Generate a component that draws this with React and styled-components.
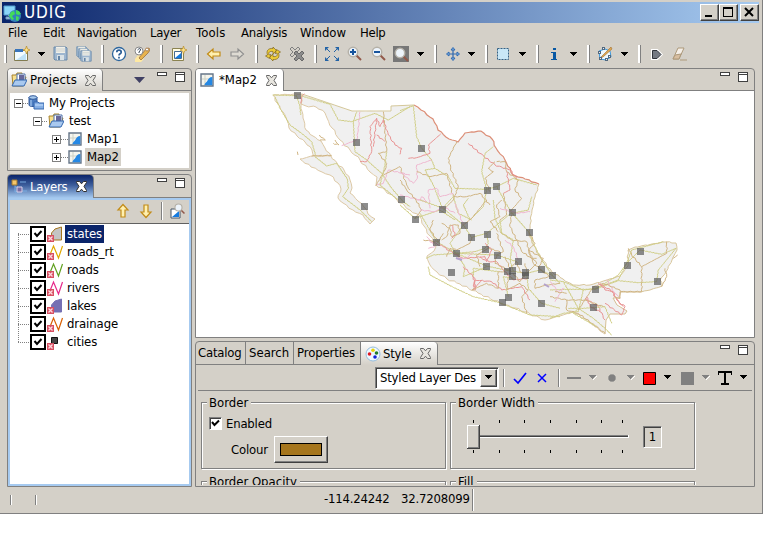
import React from "react";
import styled, { createGlobalStyle, css } from "styled-components";

const FACE = "#d4d0c8";
const SHADOW = "#808080";

const GlobalStyle = createGlobalStyle`
  * { box-sizing: border-box; }
  body { margin: 0; background: #fff; overflow: hidden; }
  svg { display: block; flex: none; }
`;

const Window = styled.div`
  width: 763px; height: 514px; display: flex; flex-direction: column;
  background: ${FACE}; border-right: 1px solid ${SHADOW}; border-bottom: 1px solid ${SHADOW};
  padding-top: 2px; color: #000;
  font: 13px/18px "DejaVu Sans Condensed", "DejaVu Sans", sans-serif;
  font-stretch: condensed;
`;
const Label = styled.span`
  flex: none; white-space: pre; width: ${p => (p.$w ? p.$w + "px" : "auto")};
  letter-spacing: ${p => p.$ls ?? -0.2}px; margin-left: ${p => p.$gap || 0}px;
`;
const TitleBar = styled.header`
  height: 21px; flex: none; margin: 0 3px 0 2px; display: flex; align-items: center;
  background: linear-gradient(90deg, #0a246a, #a6caf0); color: #fff; padding: 0 0 0 1px;
`;
const Title = styled.h1`
  margin: 0 auto 0 3px; font-size: 17px; font-weight: 400; line-height: 21px; letter-spacing: 0.9px;
`;
const CaptionButton = styled.button`
  width: 19px; height: 17px; padding: 0; margin-left: ${p => p.$gap || 0}px; background: ${FACE};
  border: 1px solid; border-color: #fff #404040 #404040 #fff; box-shadow: inset -1px -1px ${SHADOW};
`;
const MenuBar = styled.nav`height: 20px; flex: none; display: flex; align-items: center; padding-left: 8px;`;
const MenuItem = styled.span`width: ${p => p.$w}px; letter-spacing: ${p => p.$ls}px; white-space: nowrap; flex: none;`;
const ToolBar = styled.div`height: 25px; flex: none; display: flex; align-items: center; padding-bottom: 3px;`;
const Tool = styled.span`
  flex: none; display: flex; align-items: center; justify-content: center;
  width: ${p => p.$w || 16}px; height: 16px; margin-left: ${p => p.$gap}px;
`;
const Divider = styled.i`
  flex: none; width: 3px; height: ${p => p.$h || 18}px; margin-left: ${p => p.$gap}px;
  border-left: 2px solid #fff; border-right: 1px solid ${SHADOW};
`;
const Etch = styled.i`
  flex: none; width: 2px; height: ${p => p.$h}px; margin-left: ${p => p.$gap || 0}px;
  border-left: 1px solid ${SHADOW}; border-right: 1px solid #fff;
`;
const Workbench = styled.main`height: 419px; flex: none; display: flex; gap: 3px; padding-left: 7px;`;
const LeftColumn = styled.div`width: 185px; display: flex; flex-direction: column; gap: 3px;`;
const RightColumn = styled.div`width: 560px; display: flex; flex-direction: column; gap: 3px;`;
const Panel = styled.section`
  height: ${p => p.$h}px; flex: none; border: 1px solid ${SHADOW}; border-radius: 4px 4px 0 0;
  display: flex; flex-direction: column; overflow: hidden;
`;
const TabStrip = styled.div`height: ${p => p.$h || 22}px; flex: none; display: flex;`;
const Tab = styled.div`
  flex: none; width: ${p => p.$w}px; display: flex; align-items: center; padding-left: ${p => p.$pad ?? 3}px;
  border-right: 1px solid ${SHADOW};
  ${p => p.$kind === "plain" ? css`border-bottom: 1px solid ${SHADOW};`
    : p.$kind === "focus" ? css`background: linear-gradient(#0a246a, #3d5e9c 45%, #a6caf0); color: #fff; border-radius: 0 4px 0 0;`
    : p.$kind === "white" ? css`background: #fff; border-radius: 0 4px 0 0;`
    : css`background: linear-gradient(#fff, ${FACE}); border-radius: 0 4px 0 0;`}
`;
const StripRest = styled.div`
  flex: 1; display: flex; justify-content: flex-end; padding: 3px 6px 0 0; border-bottom: 1px solid ${SHADOW};
`;
const MinMark = styled.i`width: 10px; height: 4px; background: #fff; border: 1px solid #404040; margin-right: 8px;`;
const MaxMark = styled.i`width: 10px; height: 10px; background: #fff; border: 1px solid #404040; box-shadow: inset 0 1px #fff, inset 0 2px #404040;`;
const MenuMark = styled.svg`margin: 5px 12px 0 0;`;
const ProjectTree = styled.div`flex: 1; margin: 2px; background: #fff; display: flex; padding: 1px 0 0 4px;`;
const LayerBody = styled.div`
  flex: 1; border: 2px solid #a6caf0; background: #fff; display: flex; flex-direction: column;
`;
const LayerTools = styled.div`
  height: 24px; flex: none; background: ${FACE}; border-bottom: 1px solid #606060; display: flex; align-items: center; padding-left: 105px; padding-bottom:2px;
`;
const TreeRow = styled.div`height: 18px; display: flex; align-items: center; padding-left: ${p => p.$indent}px;`;
const TreeCol = styled.div`width: 100%; height: 72px;`;
const Expander = styled.i`
  flex: none; width: 9px; height: 9px; border: 1px solid ${SHADOW};
  background: linear-gradient(#000, #000) center/5px 1px no-repeat${p => p.$plus ? ", linear-gradient(#000, #000) center/1px 5px no-repeat" : ""};
`;
const Dots = styled.i`flex: none; width: ${p => p.$w}px; height: 1px; background: repeating-linear-gradient(90deg, ${SHADOW} 0 1px, transparent 1px 2px);`;
const NodeName = styled.span`
  line-height: 18px; height: 18px; padding: 0 2px; margin-left: ${p => p.$gap}px; letter-spacing: -0.1px; white-space: nowrap;
  ${p => p.$tone === "gray" && css`background: ${FACE};`}
  ${p => p.$tone === "navy" && css`background: #0a246a; color: #fff;`}
`;
const LayerList = styled.div`position: relative; padding: 1px 0 0 8px;`;
const LayerSpine = styled.i`
  position: absolute; left: 8px; top: 9px; height: 110px; width: 1px;
  background: repeating-linear-gradient(${SHADOW} 0 1px, transparent 1px 2px);
`;
const LayerCheck = styled.svg`margin: 0 1px 0 1px;`;
const Canvas = styled.div`flex: 1; background: #fff;`;
const StyleBar = styled.div`
  height: 26px; flex: none; margin: 0 2px; display: flex; align-items: center; padding: 0 0 0 177px;
  border-bottom: 1px solid ${SHADOW};
`;
const Combo = styled.div`
  flex: none; width: 124px; height: 22px; background: #fff; display: flex; align-items: center; justify-content: space-between;
  border: 1px solid; border-color: ${SHADOW} #fff #fff ${SHADOW}; box-shadow: inset 1px 1px #404040; padding: 1px 1px 1px 4px; overflow: hidden;
`;
const ComboButton = styled.span`
  flex: none; width: 17px; height: 18px; background: ${FACE}; display: flex; align-items: center; justify-content: center;
  border: 1px solid; border-color: #fff #404040 #404040 #fff; box-shadow: inset -1px -1px ${SHADOW};
`;
const StyleForm = styled.div`
  flex: 1; overflow: hidden; display: grid; grid-template-columns: 245px 245px; gap: 12px 4px; grid-template-rows: 67px 67px; padding: 11px 0 0 5px; margin-bottom: 1px;
`;
const Group = styled.div`
  border: 1px solid ${SHADOW}; box-shadow: 1px 1px #fff, inset 1px 1px #fff; display: flex; flex-direction: column; padding-left: 7px;
`;
const Legend = styled.span`
  align-self: flex-start; height: 16px; line-height: 16px; margin-top: -8px; margin-left: -2px; background: ${FACE};
  padding: 0 3px 0 2px; letter-spacing: 0; white-space: nowrap;
`;
const FormRow = styled.div`display: flex; align-items: center; height: ${p => p.$h}px; padding-left: ${p => p.$pad || 0}px;`;
const CheckBox = styled.span`
  width: 13px; height: 13px; background: #fff; border: 1px solid; border-color: ${SHADOW} #fff #fff ${SHADOW}; box-shadow: inset 1px 1px #404040;
`;
const ColourButton = styled.button`
  width: 54px; height: 27px; background: ${FACE}; padding: 6px 5px 5px 5px; margin-left: 6px; display: flex;
  border: 1px solid; border-color: #fff #404040 #404040 #fff; box-shadow: inset -1px -1px ${SHADOW};
`;
const Swatch = styled.i`width: 42px; height: 13px; border: 1px solid #000; background: #a6761d;`;
const ValueBox = styled.span`
  width: 19px; height: 22px; line-height: 20px; text-align: center; margin-left: 12px;
  border: 1px solid; border-color: ${SHADOW} #fff #fff ${SHADOW}; box-shadow: inset 1px 1px #404040;
`;
const StatusBar = styled.footer`flex: 1; display: flex; padding-left: 10px; align-items: center;`;
const Readout = styled.div`display: flex; align-items: center; margin-left: 287px; padding-bottom: 3px;`;

const Arrow = ({ c = "#000", hi }) => (
  <svg width="8" height="5" shapeRendering="crispEdges">
    {hi && <path d="M8 1L5 5H4L8 0z" fill="#fff" />}
    <path d="M0 0h7v1h-1v1h-1v1h-1v1h-1v-1h-1v-1h-1v-1h-1z" fill={c} />
  </svg>
);
const Close = ({ active }) => (
  <svg width="11" height="11" viewBox="0 0 11 11">
    <path d="M.5.5h3l2 2.3 2-2.3h3v1L8 5.4l2.5 4v1.1h-3l-2-2.3-2 2.3h-3v-1L3 5.4.5 1.5z" fill={active ? "#fff" : "#e8e6e0"} stroke={active ? "#303030" : "#666"} />
  </svg>
);
const I = ({ children, w = 16, h = 16 }) => <svg width={w} height={h} viewBox={`0 0 ${w} ${h}`}>{children}</svg>;

const FolderIcon = () => <I><path d="M1 3h4l1-2h5v4h4l-3 9H2z" fill="#f8e08c" stroke="#a88430" /><path d="M6 2h8v7H6z" fill="#fff" stroke="#4a6fa8" /><path d="M8 3h5v5H8z" fill="#68689a" /><path d="M4 8h12l-3 6H1z" fill="#a9c9ef" stroke="#3468b0" /></I>;
const ProjectsIcon = () => <I><path d="M1 2v8c0 2 8 2 8 0V2" fill="#4c7cc0" stroke="#31599a" /><ellipse cx="5" cy="2.5" rx="4" ry="1.8" fill="#a9cbee" stroke="#31599a" /><path d="M3 5v6" stroke="#b8d8f8" /><path d="M6 7h4l1 1h5v6H6z" fill="#86afe4" stroke="#3768b0" /><path d="M7 10h8" stroke="#c8e2ff" /></I>;
const MapIcon = () => <I w={14} h={14}><path d="M1 1h12v12H1z" fill="#f5f5ee" stroke="#657588" strokeWidth="1.4" /><path d="M5 2v10M2 6h10" stroke="#cbd0c5" /><path d="M12.300 4c-3 0-4 2-5 4s-2 1-3 4.300h8z" fill="#2588e4" /></I>;
const LayersIcon = () => <I w={17}><path d="M4 5v3h3M4 8v5h3M9 3h6M12 12h4" fill="none" stroke="#79abe0" /><path d="M1 1h5v5H1z" fill="#f5c66b" stroke="#a07830" /><path d="M6 8h5v5H6z" fill="#776ca4" stroke="#d8d0e8" /></I>;
const Magnify = ({ sign }) => <><path d="M9 9l5 5" stroke="#925849" strokeWidth="2" /><circle cx="6" cy="6" r="4.700" fill="#edf4fb" stroke="#b5b1a8" strokeWidth="1.500" />{sign && <path d={sign} stroke="#17549d" strokeWidth="2" />}</>;
const BlockArrow = ({ c = "#c28b17", f = "#fff0b0", r = 0 }) => <I><path transform={`rotate(${r} 8 8)`} d="M1.500 8l5.500-5v3h7v4H7v3z" fill={f} stroke={c} strokeWidth="1.200" /></I>;
const Disk = () => <><path d="M1 1h12l1 1v12H2l-1-1z" fill="#9eb6cf" stroke="#6889aa" /><path d="M3 1h9v6H3z" fill="#f1f0e8" /><path d="M3 3h9M3 5h9" stroke="#cdd2d2" /><path d="M4 9h7v5H4z" fill="#d9e1e5" /><path d="M5 10h2v4H5z" fill="#6585a7" /></>;

const icons = {
  new: <I><path d="M.5 4.500h13v10H.5z" fill="#f1fbff" stroke="#827c51" /><path d="M1 3h8v3H1z" fill="#3975bb" /><path d="M2 14L12 7v7z" fill="#bfe3f7" /><path d="M12.500 0l1 3 2.500 1-2.500 1-1 3-1-3-2.500-1 2.500-1z" fill="#ffe48b" stroke="#b98c27" strokeWidth=".7" /></I>,
  save: <I><Disk /></I>,
  saveall: <I><g transform="scale(.75)"><Disk /></g><g transform="translate(2 2) scale(.75)"><Disk /></g><g transform="translate(4 4) scale(.8)"><Disk /></g></I>,
  help: <I><circle cx="8" cy="8" r="6.500" fill="#fff" stroke="#2d669e" strokeWidth="1.300" /><path d="M5.800 6.200q0-2 2.200-2t2.200 2c0 1.800-2.200 1.300-2.200 3.300M8 10.700v1.800" fill="none" stroke="#2c5e96" strokeWidth="1.700" /></I>,
  key: <I><path d="M1 13l4-5 5 5-3 3H1z" fill="#ffe9a2" /><path d="M5 12l7-9 3-1 1 2-2 3-7 7z" fill="#e8b34d" stroke="#9d7040" strokeWidth=".8" /><circle cx="5" cy="5" r="4" fill="#fff" stroke="#888" /><path d="M3.500 4q3-3 3 0L5 6v1" fill="none" stroke="#345" /><circle cx="13" cy="3.500" r="1.500" fill="#fff" stroke="#ad8355" /></I>,
  addmap: <I><path d="M1.500 2.500h11v12h-11z" fill="#fffae0" stroke="#8b8351" /><path d="M3.500 5.500h7v7h-7z" fill="#fff" stroke="#456b92" /><path d="M10 7l-6 5h6z" fill="#147be0" /><path d="M12.500 0l1 3 2.500 1-2.500 1-1 3-1-3-2.500-1 2.500-1z" fill="#ffe48b" stroke="#b98c27" strokeWidth=".7" /></I>,
  back: <BlockArrow />,
  fwd: <BlockArrow c="#909090" f="#dedbd3" r={180} />,
  refresh: <I><path d="M8 2.500C3 2 1 5 2.500 9L.500 10l4 2.500L6 8.500l-2 .5C3 6 5 5 8 5.500V8l3.500-3.500L8 1zM8 13.500c5 .5 7-2.500 5.500-6.500l2-1-4-2.500L10 7.500l2-.5c1 3-1 4-4 3.500V8l-3.500 3.500L8 15z" fill="#eccb37" stroke="#806621" strokeWidth=".7" /></I>,
  stop: <I><path d="M1 3l2-2 3 3 3-3 2 2-3 3 3 3-2 2-3-3-3 3-2-2 3-3z" fill="#d4d0c8" stroke="#808080" /><path d="M5 7l2-2 3 3 3-3 2 2-3 3 3 3-2 2-3-3-3 3-2-2 3-3z" fill="#8c8c8c" stroke="#696969" /></I>,
  extent: <I><path d="M2 2l12 12M14 2L2 14" stroke="#9fb7d0" strokeDasharray="5 6" /><path d="M1 5V1h4zM11 1h4v4zM15 11v4h-4zM5 15H1v-4z" fill="#2363a6" /><path d="M2 2l4 4M14 2l-4 4M2 14l4-4M14 14l-4-4" stroke="#2363a6" /></I>,
  zoomin: <I><Magnify sign="M6 3v6M3 6h6" /></I>,
  zoomout: <I><Magnify sign="M3 6h6" /></I>,
  zoombox: <I><path d="M0 0h16v16H0z" fill="#777" /><g transform="translate(1 1)"><Magnify /></g></I>,
  pan: <I><path d="M8 3v10M3 8h10" stroke="#2e68b0" strokeWidth="1.200" /><path d="M8 1.500L6 4h4zM8 14.500L6 12h4zM1.500 8L4 6v4zM14.500 8L12 6v4z" fill="#8fc0ee" stroke="#2e68b0" /></I>,
  select: <I><path d="M2.500 2.500h11v11h-11z" fill="#c9e7f7" stroke="#346184" strokeDasharray="2 1" /></I>,
  info: <I><path d="M7 2h3v2H7zM5 6h5v7h1v1H5v-1h2V7H5z" fill="#0758a4" /></I>,
  edit: <I><path d="M2 5l6-2 5 2 1 6-5 3-6-1z" fill="#edf8ff" stroke="#3998df" /><path d="M5 10L14 1l1 2-9 8-3 1z" fill="#dda653" stroke="#a17130" strokeWidth=".6" />{[[1.5,5.5],[5.500,1.500],[11.500,9.500],[2.500,11.500],[8.500,12.500]].map(([x,y]) => <rect key={`${x}-${y}`} x={x} y={y} width="2" height="2" fill="#eee" stroke="#526980" />)}</I>,
  poly: <I><path d="M4.500 4.500H9l4 4-4 4H4.500z" fill="#747982" stroke="#fff" strokeWidth="3" /><path d="M4.500 4.500H9l4 4-4 4H4.500z" fill="#747982" stroke="#30343b" /></I>,
  eraser: <I><path d="M7 2h6L8 13H2z" fill="#f4eee7" stroke="#ad997b" /><path d="M2 13l2-4 6-1-2 5zM9 14h7" fill="#d8bea0" stroke="#ad997b" /></I>,
};
const toolbar = [
  ["|", 4], ["new", 7], ["v", 8], ["save", 7], ["saveall", 7], ["|", 9], ["help", 7], ["key", 7], ["|", 10], ["addmap", 8],
  ["|", 9], ["back", 7], ["fwd", 7], ["|", 10], ["refresh", 7], ["stop", 8], ["|", 9], ["extent", 7], ["zoomin", 7], ["zoomout", 8],
  ["zoombox", 6], ["v", 8], ["|", 9], ["pan", 8], ["v", 7], ["|", 9], ["select", 7], ["v", 8], ["|", 9], ["info", 7], ["v", 8],
  ["|", 9], ["edit", 7], ["v", 8], ["|", 9], ["poly", 7], ["eraser", 7],
];
const layers = [
  ["states", "area", "#a6761d", "#c4c4c4"], ["roads_rt", "line", "#e0a800"], ["roads", "line", "#60a020"], ["rivers", "line", "#e7298a"],
  ["lakes", "area", "#7570b3", "#7570b3"], ["drainage", "line", "#d95f02"], ["cities", "point", "#333"],
];
const LayerIcon = ({ kind, c, fill }) => (
  <I w={17} h={18}>
    {kind === "area" && <path d="M4.500 8L8 4l6.500-2v13H5z" fill={fill} stroke={c} />}
    {kind === "line" && <path d="M2.500 13l4-10 5 12 4-12" fill="none" stroke={c} strokeWidth="1.200" />}
    {kind === "point" && <path d="M4.500 4.500h6v6h-6z" fill="#444" stroke="#111" />}
    <path d="M0 10h7v7H0z" fill="#d75062" /><path d="M1.500 11.500l4 4m0-4l-4 4" stroke="#ffd8df" strokeWidth="1.300" />
  </I>
);

/* Subdivides each segment and nudges the new vertices, giving coastlines and rivers their ragged edge. */
function rough(points, amp = 1) {
  const n = points.trim().split(/\s+/).map(p => p.split(",").map(Number));
  const out = [n[0]];
  for (let i = 1; i < n.length; i++) {
    const [x0, y0] = n[i - 1], [x1, y1] = n[i];
    const steps = Math.max(1, Math.round(Math.hypot(x1 - x0, y1 - y0) / (3.5 * Math.max(1, amp))));
    for (let k = 1; k < steps; k++) {
      const t = k / steps, j = Math.sin((x0 + i * 7 + k * 3.7) * 12.98) * amp;
      out.push([x0 + (x1 - x0) * t + j, y0 + (y1 - y0) * t - j * 0.7]);
    }
    out.push([x1, y1]);
  }
  return out.map(p => p.map(v => v.toFixed(1)).join(",")).join(" ");
}
const bajaNorth = "273,95 302,94 301,105 303,118 306,130 313,136 321,141 325,148 331,156 314,157 312,150 305,142 297,136 289,128 287,120 283,112 277,103 273,95";
const bajaSouth = "300,159 313,156 331,156 337,163 344,170 350,180 352,188 350,193 358,201 364,207 368,214 375,219 370,224 363,215 353,210 343,203 338,198 341,189 338,183 330,175 322,172 311,167 300,159";
const coast = "605,334 590,322 573,312 560,316 545,320 530,314 515,308 500,303 478,293 460,284 447,279 437,272 430,265 427,256 434,251 436,245 430,236 424,226 420,216 410,210 397,200 385,190 376,185 377,177 370,172 360,160 350,150 340,140 332,128 327,118 325,113 316,107 306,106 301,104 302,94";
const gulf = "539,184 535,197 532,210 530,225 529,232 532,243 541,258 552,272 563,279 573,285 590,285 607,280 620,276 628,266 628,250 635,247 665,242 676,243 677,250 672,260 666,272 660,280 662,286 650,290 641,292";
const usBorder = "414,105 421,110 433,119 438,130 449,139 458,142 465,133 481,131 492,139 496,148 505,160 513,175 525,179 539,184";
const north = "302,94 352,111 391,111 391,106 414,105";
const south = "641,292 620,292 620,298 613,298 617,305 627,311 625,314 610,314 606,320 605,334";
const mainland = [north, usBorder, gulf, south, coast].join(" ");

/* Line work is kept per sheet at three units to the pixel. */
const sheets = [
  { at: [260, 85], lines: [
    ["y", "38,30 110,32 120,65 122,90"], ["y", "45,35 60,70 90,120 125,145 155,170 165,205 165,215 200,243 230,235 262,282 265,310 248,335 300,375 335,410"],
    ["b", "155,213 215,211"], ["r", "122,55 124,38 133,26"],
    ["y", "125,33 210,58 235,105 275,110 345,85 385,105 450,65"], ["y", "290,80 280,110 285,200 320,225 365,265 395,310 430,350 450,365"],
    ["b", "370,80 380,200 355,205 380,235 375,255 347,303"], ["p", "300,80 295,135 290,165 245,182"], ["r", "350,100 330,125 335,200 320,230 300,230"],
    ["r", "340,185 350,100 360,125 370,105 385,150 405,180 425,190 420,208"], ["r", "350,150 375,170"], ["p", "350,300 370,295 385,255 450,270"],
    ["b", "370,270 420,245 440,300 450,315"], ["y", "380,200 375,240 360,300 415,345"], ["b", "178,150 196,165 180,165"], ["b", "112,200 114,210"], ["b", "225,165 237,180 220,175"],
  ] },
  { at: [400, 90], lines: [
    ["y", "40,47 50,140 65,175 95,210 105,235 145,260 165,295 260,298 290,290"], ["y", "0,62 40,47"], ["b", "170,155 145,205 155,245 175,290 160,330 130,360"],
    ["r", "122,132 85,165 90,190 50,203 25,205"], ["p", "95,210 50,225 52,265 40,280 0,245"], ["r", "205,160 240,190 285,225 330,240 355,270"], ["y", "280,170 255,190 245,245 260,298 250,350 210,390"],
    ["b", "285,215 265,235 280,245 255,265 270,305"], ["b", "290,215 315,215 320,245 355,270 345,300 365,325 330,365"], ["y", "290,290 340,265 410,285"], ["y", "290,290 335,370"],
    ["b", "50,245 90,260 140,250 160,320 200,320 240,310 270,345"], ["r", "320,245 330,300 310,310"], ["y", "105,235 75,240 100,285 127,355 160,320 175,370 215,390"],
    ["p", "0,315 60,330 65,320 80,335 40,325"], ["p", "90,355 85,300 110,295 120,320 160,310"], ["b", "0,270 20,300 45,325 65,360 45,385"], ["y", "0,345 45,385 120,360 165,390"],
    ["b", "310,310 320,375 300,390"], ["y", "335,370 385,360 395,320"], ["p", "300,355 350,370 390,365"], ["y", "205,325 190,345 210,390"],
  ] },
  { at: [420, 200], lines: [
    ["y", "0,40 50,125 108,160 200,198 265,212 320,220 360,210 398,227"], ["y", "25,200 30,225 100,262 160,290 240,308 330,345 420,350"], ["y", "18,175 40,165 108,160 135,200 130,230 200,200"],
    ["y", "0,0 70,25 130,75 155,112 200,100 275,38 328,98"], ["y", "130,75 90,130 108,160 230,165 290,185"], ["y", "200,100 205,130 195,145 165,155 108,160"],
    ["b", "65,70 90,85 95,110 120,100 115,75 90,75 80,110 65,120"], ["r", "35,125 70,140 100,160 130,175 195,170 205,185 230,185 255,215 280,240 325,235"],
    ["b", "155,112 150,130 110,150 90,145 80,170"], ["b", "235,95 210,65 240,50 230,15 245,0"], ["b", "275,38 270,80 290,120 305,155 335,175 350,175"], ["b", "240,95 275,120 320,125 330,165 350,190 320,220"],
    ["b", "230,100 250,155 230,165 225,190 275,215"], ["y", "328,98 345,140 365,180 398,227 420,250"], ["b", "328,98 345,130 325,150 340,190 365,210"], ["y", "240,60 245,100 280,120 270,180 280,215"],
    ["r", "95,75 105,105 95,115"], ["r", "160,230 165,270 165,240 215,245 245,270 305,260 330,300"], ["r", "130,200 165,235 160,270 185,240"], ["r", "180,170 200,185 215,150 195,130"],
    ["b", "155,270 200,250 235,265 235,215 255,215"], ["b", "265,230 260,270 300,250 325,270 305,290 320,340"], ["y", "160,230 160,205 235,215"], ["b", "10,120 55,125 70,100"],
    ["p", "0,30 45,35 70,20 105,40"], ["p", "105,10 130,75"], ["p", "255,120 280,140 295,180"], ["p", "110,175 140,175 160,155"], ["p", "20,110 45,140 25,145"],
    ["b", "325,150 370,175 355,205 390,230 345,240 345,265 380,255 420,250"], ["y", "320,220 325,265 365,310 420,325"], ["y", "265,290 250,230 280,235"], ["b", "180,200 170,165 205,145 240,155"],
    ["b", "40,60 30,90 55,125"], ["b", "200,0 155,55 130,75"], ["y", "220,0 225,55 245,100"], ["b", "315,190 320,215 300,245 280,220"], ["b", "255,170 270,205 290,185 300,215 315,230"],
  ] },
  { at: [550, 220], lines: [
    ["y", "0,180 40,185 85,265 130,295 165,325 185,345"], ["y", "40,185 100,210 135,205 205,180 230,130 270,90 335,103 378,85"], ["y", "135,208 205,182 265,188 320,185 325,150 378,85"],
    ["b", "235,85 245,105 275,140 275,215 212,215"], ["b", "275,140 350,100 350,65"], ["y", "0,210 50,208 135,208 205,165 230,130 245,90 340,65"], ["b", "0,230 50,240 105,240 130,200 160,190"],
    ["r", "105,235 145,260 165,300"], ["r", "150,190 165,210 185,215 205,245 225,260 215,285 165,250"], ["r", "145,190 190,215 200,240 220,260"], ["p", "0,185 25,215 40,205 15,245"], ["p", "170,180 195,220 210,235"],
    ["y", "0,295 40,280 85,275 100,210"], ["y", "55,265 100,265 165,260 185,310"], ["b", "50,240 50,270 85,280 165,340"], ["b", "85,270 105,240 160,260"], ["b", "345,145 350,170 335,200"], ["b", "370,115 383,105"],
    ["b", "160,190 210,210 210,235 195,230"], ["r", "110,230 120,260 150,275"], ["b", "15,215 50,220"], ["y", "85,265 70,280 140,320"],
  ] },
];
const tint = { y: "#cfcd84", b: "#d0b584", r: "#e89494", p: "#efb8d0" };
const cities = [[297,95],[356,142],[421,148],[364,206],[401,199],[415,219],[442,209],[487,190],[496,186],[512,212],[436,242],[464,225],[471,237],[487,234],[529,232],[456,253],[485,249],[497,255],[451,272],[486,266],[518,261],[507,271],[512,270],[512,276],[525,272],[525,275],[541,269],[552,275],[508,297],[502,302],[541,303],[627,265],[640,251],[657,281],[595,289],[593,307]];

const MexicoMap = () => (
  <svg width="558" height="246" viewBox="196 91 558 246">
    <g fill="#f0f0f0" stroke="#ddc9a6">
      <polygon points={rough(mainland, 0.7)} stroke="none" />
      <polygon points={rough(bajaNorth, 0.6)} /><polygon points={rough(bajaSouth, 0.8)} />
    </g>
    <g fill="none" strokeWidth="1">
      <polyline points={north} stroke="#d5c89a" />
      <polyline points={rough(coast, 0.9)} stroke="#ddc9a6" /><polyline points={rough(gulf, 0.8)} stroke="#d8c69c" />
      <polyline points={south} stroke="#d5bf94" />
      <polyline points={rough(usBorder, 0.6)} stroke="#dc8f78" strokeWidth="1.200" />
      {sheets.map(s => (
        <g key={s.at.join()} transform={`translate(${s.at.join()}) scale(.33333)`} strokeWidth="3">
          {s.lines.map(([k, pts]) => <polyline key={pts} points={rough(pts, k === "y" ? 1 : 2)} stroke={tint[k]} />)}
        </g>
      ))}
      <path d="M456 258l6 2M544 284l5 3" stroke="#b4a2cc" strokeWidth="2" />
    </g>
    <g fill="#555" fillOpacity=".67" shapeRendering="crispEdges">{cities.map(([x, y]) => <rect key={`${x}-${y}`} x={x - 3} y={y - 3} width="7" height="7" />)}</g>
  </svg>
);

const Controls = ({ menu }) => (
  <StripRest>
    {menu && <MenuMark width="11" height="6"><path d="M0 0h11L5.500 6z" fill="#404064" /></MenuMark>}
    <MinMark /><MaxMark />
  </StripRest>
);

const Slider = () => (
  <svg width="164" height="36" shapeRendering="crispEdges">
    <path d="M1 16h160v1H1z" fill="#808080" /><path d="M1 17h160v1H1z" fill="#404040" /><path d="M1 18h161v1H1zM161 16h1v3h-1z" fill="#fff" />
    {[6, 32, 57, 83, 109, 134, 155].map(x => <path key={x} d={`M${x} 1h1v3h-1zM${x} 31h1v3h-1z`} />)}
    <path d="M0 6h13v24H0z" fill="#404040" /><path d="M0 6h12v23H0z" fill="#fff" /><path d="M1 7h11v22H1z" fill="#808080" /><path d="M1 7h10v21H1z" fill={FACE} />
  </svg>
);

export default function App() {
  return (
    <>
      <GlobalStyle />
      <Window>
        <TitleBar>
          <I w={18} h={18}><path d="M1 2h11v9H1z" fill="#8bd5f7" stroke="#539dce" /><path d="M5 11h3v2H3v2h5" fill="#b1c6d5" stroke="#6b9fc4" /><circle cx="12" cy="12" r="6" fill="#3283ba" /><path d="M8 8l3-1 1 3-3 2 2 3-2 1-3-4zM13 6l3 1 2 3-3 1-2-1zM13 12l3 1-1 4-2-1z" fill="#42dd58" /></I>
          <Title>UDIG</Title>
          <CaptionButton><svg width="17" height="15"><path d="M4 10h7v2H4z" /></svg></CaptionButton>
          <CaptionButton><svg width="17" height="15" shapeRendering="crispEdges"><path d="M3 2h10v10H3zM4 4v7h8V4z" fillRule="evenodd" /></svg></CaptionButton>
          <CaptionButton $gap={2}><svg width="17" height="15"><path d="M4 3l8 8M12 3l-8 8" stroke="#000" strokeWidth="2" /></svg></CaptionButton>
        </TitleBar>
        <MenuBar>
          <MenuItem $w={35} $ls={0}>File</MenuItem><MenuItem $w={34} $ls={-0.2}>Edit</MenuItem><MenuItem $w={73} $ls={-0.35}>Navigation</MenuItem>
          <MenuItem $w={46} $ls={-0.3}>Layer</MenuItem><MenuItem $w={45} $ls={0.2}>Tools</MenuItem><MenuItem $w={59} $ls={-0.25}>Analysis</MenuItem>
          <MenuItem $w={60} $ls={0}>Window</MenuItem><MenuItem $w={40} $ls={-0.3}>Help</MenuItem>
        </MenuBar>
        <ToolBar>
          {toolbar.map(([k, gap], i) => k === "|" ? <Divider key={i} $gap={gap} /> : k === "v" ? <Tool key={i} $w={8} $gap={gap}><Arrow /></Tool> : <Tool key={i} $gap={gap}>{icons[k]}</Tool>)}
        </ToolBar>
        <Workbench>
          <LeftColumn>
            <Panel $h={103}>
              <TabStrip>
                <Tab $w={95}><FolderIcon /><Label $gap={3} $w={55} $ls={0.1}>Projects</Label><Close /></Tab>
                <Controls menu />
              </TabStrip>
              <ProjectTree>
                <TreeCol>
                  <TreeRow><Expander /><Dots $w={5} /><ProjectsIcon /><NodeName $gap={3}>My Projects</NodeName></TreeRow>
                  <TreeRow $indent={19}><Expander /><Dots $w={6} /><FolderIcon /><NodeName $gap={3}>test</NodeName></TreeRow>
                  <TreeRow $indent={38}><Expander $plus /><Dots $w={7} /><MapIcon /><NodeName $gap={3}>Map1</NodeName></TreeRow>
                  <TreeRow $indent={38}><Expander $plus /><Dots $w={7} /><MapIcon /><NodeName $gap={3} $tone="gray">Map2</NodeName></TreeRow>
                </TreeCol>
              </ProjectTree>
            </Panel>
            <Panel $h={313}>
              <TabStrip $h={23}>
                <Tab $kind="focus" $w={86}><LayersIcon /><Label $gap={2} $w={46}>Layers</Label><Close active /></Tab>
                <Controls />
              </TabStrip>
              <LayerBody>
                <LayerTools>
                  <BlockArrow r={90} /><Tool $gap={7}><BlockArrow r={270} /></Tool><Etch $h={18} $gap={7} />
                  <Tool $gap={7}><I><path d="M1 6h9v9H1z" fill="#fff" stroke="#456" /><path d="M9 8l-7 6h7z" fill="#147be0" /><g transform="translate(4 0) scale(.75)"><Magnify /></g></I></Tool>
                </LayerTools>
                <LayerList>
                  <LayerSpine />
                  {layers.map(([name, kind, c, fill], i) => (
                    <TreeRow key={name}><Dots $w={11} />
                      <LayerCheck width="16" height="16"><path d="M1 1h14v14H1z" fill="#fff" stroke="#000" strokeWidth="2" /><path d="M4.500 7l2.500 3 4.500-5" fill="none" stroke="#000" strokeWidth="2" /></LayerCheck>
                      <LayerIcon kind={kind} c={c} fill={fill} /><NodeName $gap={1} $tone={i === 0 ? "navy" : undefined}>{name}</NodeName>
                    </TreeRow>
                  ))}
                </LayerList>
              </LayerBody>
            </Panel>
          </LeftColumn>
          <RightColumn>
            <Panel $h={270}>
              <TabStrip>
                <Tab $kind="white" $w={88} $pad={4}><MapIcon /><Label $gap={5} $w={47} $ls={0}>*Map2</Label><Close /></Tab>
                <Controls />
              </TabStrip>
              <Canvas><MexicoMap /></Canvas>
            </Panel>
            <Panel $h={146}>
              <TabStrip $h={23}>
                <Tab $kind="plain" $w={50} $pad={2}><Label>Catalog</Label></Tab>
                <Tab $kind="plain" $w={48}><Label $ls={0}>Search</Label></Tab>
                <Tab $kind="plain" $w={67}><Label $ls={-0.1}>Properties</Label></Tab>
                <Tab $w={77} $pad={4}>
                  <I><circle cx="8" cy="8" r="7" fill="#eef7ff" stroke="#94bddd" /><circle cx="4.500" cy="8" r="1.800" fill="#e01822" /><circle cx="8" cy="4.300" r="1.800" fill="#ead40b" /><circle cx="11.500" cy="7" r="1.800" fill="#237c2c" /><circle cx="10" cy="11" r="1.800" fill="#1020d8" /></I>
                  <Label $gap={2} $w={37}>Style</Label><Close />
                </Tab>
                <Controls />
              </TabStrip>
              <StyleBar>
                <Combo><Label>Styled Layer Des</Label><ComboButton><Arrow /></ComboButton></Combo>
                <Etch $h={18} $gap={4} />
                <Tool $gap={7}><I><path d="M2 9l4 4L14 3" fill="none" stroke="#00f" strokeWidth="1.700" /></I></Tool>
                <Tool $gap={6}><I><path d="M4 4l8 8M12 4l-8 8" stroke="#00f" strokeWidth="1.500" /></I></Tool>
                <Etch $h={18} $gap={8} />
                <Tool $gap={6}><I><path d="M1 7h14v2H1z" fill="#808080" /></I></Tool><Tool $w={8} $gap={7}><Arrow c="#808080" hi /></Tool>
                <Tool $gap={7}><I><path d="M6 5h4v6H6zM5 6h6v4H5zM8 4.500v7M4.500 8h7" fill="#808080" stroke="#808080" /></I></Tool><Tool $w={8} $gap={7}><Arrow c="#808080" hi /></Tool>
                <Tool $gap={6}><I><path d="M2.500 2.500h12v12h-12z" fill="#f00" stroke="#000" /></I></Tool><Tool $w={8} $gap={7}><Arrow /></Tool>
                <Tool $gap={7}><I><path d="M2 2h13v13H2z" fill="#808080" /></I></Tool><Tool $w={8} $gap={7}><Arrow c="#808080" hi /></Tool>
                <Tool $gap={7}><I><path d="M1 1h14v4h-1V3H9v10h3v2H4v-2h3V3H2v2H1z" /></I></Tool><Tool $w={8} $gap={7}><Arrow /></Tool>
              </StyleBar>
              <StyleForm>
                <Group>
                  <Legend>Border</Legend>
                  <FormRow $h={25}><CheckBox><svg width="11" height="11"><path d="M2 4l2.500 3L9 2.500" fill="none" stroke="#000" strokeWidth="2" /></svg></CheckBox><Label $gap={4}>Enabled</Label></FormRow>
                  <FormRow $h={27} $pad={22}><Label $w={37}>Colour</Label><ColourButton><Swatch /></ColourButton></FormRow>
                </Group>
                <Group>
                  <Legend>Border Width</Legend>
                  <FormRow $h={52} $pad={9}><Slider /><ValueBox>1</ValueBox></FormRow>
                </Group>
                <Group><Legend>Border Opacity</Legend></Group>
                <Group><Legend>Fill</Legend></Group>
              </StyleForm>
            </Panel>
          </RightColumn>
        </Workbench>
        <StatusBar>
          <Etch $h={10} /><Etch $h={10} $gap={23} />
          <Readout><Label $w={77}>-114.24242</Label><Label $w={70}>32.7208099</Label></Readout><Etch $h={22} $gap={1} />
        </StatusBar>
      </Window>
    </>
  );
}
